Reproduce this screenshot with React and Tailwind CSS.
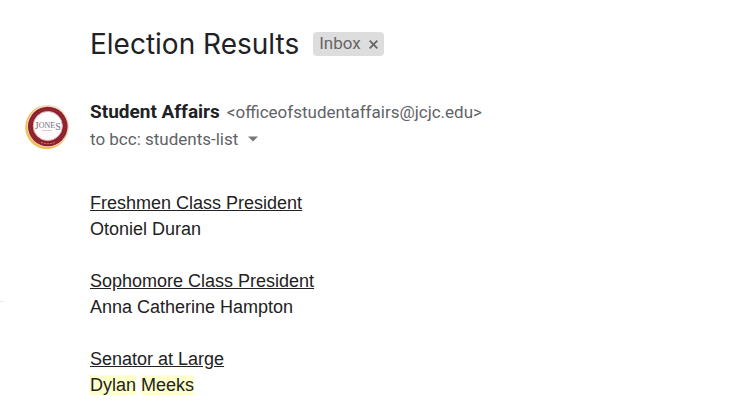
import React from "react";

const results = [
  { office: "Freshmen Class President", winner: "Otoniel Duran" },
  { office: "Sophomore Class President", winner: "Anna Catherine Hampton" },
  { office: "Senator at Large", winner: "Dylan Meeks", highlighted: true },
];

function Avatar() {
  return (
    <svg viewBox="0 0 44 46" className="h-[46px] w-11 shrink-0" role="img" aria-label="Jones College seal">
      <ellipse cx="21.8" cy="23.2" rx="21.6" ry="22" fill="#efbf5c" />
      <ellipse cx="23" cy="22" rx="20.8" ry="21" fill="#f3dcc0" />
      <circle cx="22.8" cy="22.5" r="19.8" fill="#8e1f2d" />
      <circle cx="22.8" cy="22.5" r="17.4" fill="none" stroke="#a03842" strokeWidth="1" strokeDasharray="1.5 1.5" />
      <circle cx="22.8" cy="22" r="14.6" fill="#fdfbfc" stroke="#dfb0a8" strokeWidth="1" />
      <path d="M16 38.4q7.2 2.6 14 0" fill="none" stroke="#c77a50" strokeWidth="1" strokeDasharray="2 1" />
      <text x="22.8" y="24" textAnchor="middle" fontSize="8" fill="#77717f" fontFamily="'Liberation Serif', serif">
        <tspan fontSize="10" dy="1">J</tspan>
        <tspan dy="-1">ONE</tspan>
        <tspan fontSize="10" dy="2">S</tspan>
      </text>
      <path d="M17 26.5h10" stroke="#e2caca" strokeWidth="1" />
    </svg>
  );
}

function Subject() {
  return (
    <header className="flex items-center gap-[14px] pl-[90px]">
      <h1 className="font-['Inter',sans-serif] text-[28px] leading-9 text-[#202124]">Election Results</h1>
      <div className="flex h-6 items-center gap-2 rounded bg-[#dddddd] px-[6px] font-['Roboto',sans-serif] text-[17px] text-[#666666]">
        <span>Inbox</span>
        <button type="button" aria-label="Remove label Inbox" className="flex">
          <svg viewBox="0 0 9 9" className="size-[9px]" fill="none" stroke="currentColor" strokeWidth="1.8">
            <path d="M.7.7l7.6 7.6M8.3.7L.7 8.3" />
          </svg>
        </button>
      </div>
    </header>
  );
}

function Sender() {
  return (
    <section className="mt-9 flex items-start gap-[21px] pl-[25px] font-['Roboto',sans-serif] text-[#5f6368]">
      <div className="pt-[6px]">
        <Avatar />
      </div>
      <div>
        <div className="flex items-baseline gap-[7px] leading-7">
          <h2 className="text-[19px] leading-7 font-bold text-[#202124]">Student Affairs</h2>
          <span className="text-[17px]">&lt;officeofstudentaffairs@jcjc.edu&gt;</span>
        </div>
        <div className="flex items-center gap-[10px] text-[17px] leading-[26px]">
          <span>to bcc: students-list</span>
          <button type="button" aria-label="Show details" className="flex">
            <svg viewBox="0 0 10 6" className="h-[6px] w-[10px]" fill="#777777">
              <path d="M0 .5h10L5 5.5z" />
            </svg>
          </button>
        </div>
      </div>
    </section>
  );
}

export default function App() {
  return (
    <main className="relative min-h-screen bg-white pt-[26px]">
      <div className="absolute top-[301px] left-0 h-px w-1 bg-[#e8e8e8]" />
      <Subject />
      <Sender />
      <article className="mt-[38px] space-y-[26px] pl-[90px] font-['Liberation_Sans',Arial,sans-serif] text-lg leading-[26px] text-[#222222]">
        {results.map(({ office, winner, highlighted }) => (
          <section key={office}>
            <h3 className="underline">{office}</h3>
            <p>
              {highlighted
                ? winner.split(" ").map((word, i) => (
                    <React.Fragment key={word}>
                      {i > 0 && " "}
                      <mark className="bg-[#ffffcc] text-inherit">{word}</mark>
                    </React.Fragment>
                  ))
                : winner}
            </p>
          </section>
        ))}
      </article>
    </main>
  );
}
